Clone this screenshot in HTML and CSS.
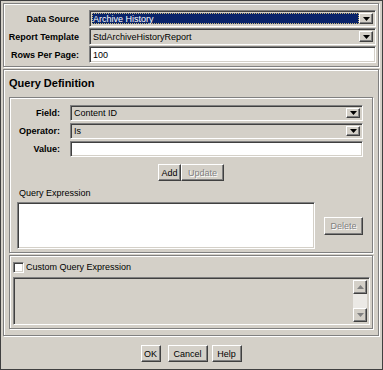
FILE: index.html
```html
<!DOCTYPE html>
<html>
<head>
<meta charset="utf-8">
<link rel="stylesheet" href="styles.css">
</head>
<body>
<div class="window">
  <div class="etched top-panel">
    <div class="form-grid top-grid">
      <div class="lbl">Data Source</div>
      <div class="combo"><div class="value selected"><span>Archive History</span></div><div class="drop"><svg width="7" height="4" viewBox="0 0 7 4"><polygon points="0,0 7,0 3.5,4" fill="#000"/></svg></div></div>
      <div class="lbl">Report Template</div>
      <div class="combo"><div class="value">StdArchiveHistoryReport</div><div class="drop"><svg width="7" height="4" viewBox="0 0 7 4"><polygon points="0,0 7,0 3.5,4" fill="#000"/></svg></div></div>
      <div class="lbl">Rows Per Page:</div>
      <div class="field">100</div>
    </div>
  </div>

  <div class="etched query-panel">
    <div class="title">Query Definition</div>
    <div class="etched inner-panel">
      <div class="form-grid q-grid">
        <div class="lbl">Field:</div>
        <div class="combo"><div class="value">Content ID</div><div class="drop"><svg width="7" height="4" viewBox="0 0 7 4"><polygon points="0,0 7,0 3.5,4" fill="#000"/></svg></div></div>
        <div class="lbl">Operator:</div>
        <div class="combo"><div class="value">Is</div><div class="drop"><svg width="7" height="4" viewBox="0 0 7 4"><polygon points="0,0 7,0 3.5,4" fill="#000"/></svg></div></div>
        <div class="lbl">Value:</div>
        <div class="field"></div>
      </div>
      <div class="btn-row">
        <button class="btn add">Add</button><button class="btn update" disabled>Update</button>
      </div>
      <div class="qe-label">Query Expression</div>
      <div class="qe-row">
        <div class="textarea"></div>
        <button class="btn delete" disabled>Delete</button>
      </div>
    </div>
    <div class="etched custom-panel">
      <div class="check-row"><span class="checkbox"></span><span>Custom Query Expression</span></div>
      <div class="textarea disabled-area">
        <div class="scrollbar">
          <div class="sb-btn"><svg width="7" height="4" viewBox="0 0 7 4"><polygon points="0,4 7,4 3.5,0" fill="#808080"/></svg></div>
          <div class="sb-track"></div>
          <div class="sb-btn"><svg width="7" height="4" viewBox="0 0 7 4"><polygon points="0,0 7,0 3.5,4" fill="#808080"/></svg></div>
        </div>
      </div>
    </div>
  </div>

  <div class="footer">
    <button class="btn ok">OK</button>
    <button class="btn cancel">Cancel</button>
    <button class="btn help">Help</button>
  </div>
</div>
</body>
</html>
```

FILE: styles.css
```css
* { box-sizing: border-box; }
html, body { margin: 0; padding: 0; background: #d4d0c8; }
body { font-family: "Liberation Sans", Arial, sans-serif; font-size: 9px; color: #000; }

.window {
  width: 383px;
  height: 370px;
  border: 1px solid #404040;
  background: #d4d0c8;
  padding: 2px 3px 0 2px;
}

.etched {
  border: 1px solid #808080;
  box-shadow: 1px 1px 0 #fff, inset 1px 1px 0 #fff;
}

.top-panel {
  height: 64px;
  padding: 6px 2px 0 0;
}

.form-grid {
  display: grid;
  grid-auto-rows: 16px;
  row-gap: 2px;
  column-gap: 8px;
}
.top-grid {
  grid-template-columns: 77px 1fr;
  grid-auto-rows: 17px;
  row-gap: 1px;
}
.q-grid { grid-template-columns: 52px 1fr; }

.lbl {
  font-weight: bold;
  text-align: right;
  padding-right: 2px;
  display: flex;
  align-items: center;
  justify-content: flex-end;
  white-space: nowrap;
}

.combo, .field, .textarea, .checkbox {
  border: 1px solid;
  border-color: #808080 #fff #fff #808080;
  box-shadow: inset 1px 1px 0 #404040, inset -1px -1px 0 #d4d0c8;
}

.combo {
  display: flex;
  padding: 2px;
  background: #d4d0c8;
}
.combo .value {
  flex: 1;
  display: flex;
  align-items: center;
  padding-left: 1px;
  white-space: nowrap;
}
.combo .value.selected {
  background: #0a246a;
  color: #fff;
  border: 1px dotted #c9b77a;
  padding-left: 0;
}
.drop {
  width: 14px;
  display: flex;
  align-items: center;
  justify-content: center;
  background: #d4d0c8;
  border: 1px solid;
  border-color: #fff #404040 #404040 #fff;
  box-shadow: inset -1px -1px 0 #808080;
}

.field {
  background: #fff;
  display: flex;
  align-items: center;
  padding-left: 3px;
}

.query-panel {
  margin-top: 2px;
  height: 267px;
  padding: 0 5px 0 5px;
}
.title {
  font-size: 11px;
  font-weight: bold;
  height: 27px;
  padding-top: 7px;
  line-height: 13px;
}

.inner-panel {
  height: 156px;
  padding: 7px 9px 0 0;
}

.btn {
  font-family: "Liberation Sans", Arial, sans-serif;
  font-size: 9px;
  color: #000;
  background: #d4d0c8;
  border: 1px solid;
  border-color: #fff #404040 #404040 #fff;
  box-shadow: inset -1px -1px 0 #808080;
  padding: 0;
  height: 17px;
  margin: 0;
}
.btn:disabled {
  color: #808080;
  text-shadow: 1px 1px 0 #fff;
}

.btn-row {
  display: flex;
  justify-content: center;
  margin-top: 7px;
  padding-left: 9px;
}
.add { width: 23px; }
.update { width: 43px; }

.qe-label {
  margin-top: 6px;
  padding-left: 9px;
  height: 14px;
  line-height: 13px;
}
.qe-row {
  display: flex;
  align-items: center;
  padding-left: 7px;
  margin-top: 1px;
}
.textarea {
  background: #fff;
}
.qe-row .textarea {
  width: 300px;
  height: 47px;
}
.delete {
  width: 39px;
  height: 18px;
  margin-left: 9px;
}

.custom-panel {
  margin-top: 2px;
  height: 74px;
  padding: 6px 2px 0 3px;
}
.check-row {
  display: flex;
  align-items: center;
  gap: 2px;
  height: 11px;
  line-height: 11px;
}
.checkbox {
  width: 11px;
  height: 11px;
  background: #fff;
}
.disabled-area {
  margin-top: 4px;
  height: 48px;
  background: #d4d0c8;
  display: flex;
  justify-content: flex-end;
  padding: 2px;
}
.scrollbar {
  width: 14px;
  display: flex;
  flex-direction: column;
}
.sb-btn {
  height: 14px;
  display: flex;
  align-items: center;
  justify-content: center;
  border: 1px solid;
  border-color: #fff #404040 #404040 #fff;
  box-shadow: inset -1px -1px 0 #808080;
  background: #d4d0c8;
}
.sb-track {
  flex: 1;
  background: #ebe9e5;
}

.footer {
  display: flex;
  justify-content: center;
  padding-top: 9px;
}
.ok { width: 20px; margin-right: 7px; }
.cancel { width: 40px; margin-right: 4px; }
.help { width: 30px; }
```
